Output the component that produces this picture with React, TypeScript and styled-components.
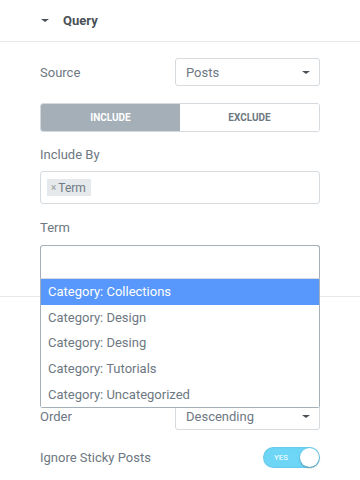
import React from 'react'
import styled, { createGlobalStyle } from 'styled-components'

const GlobalStyle = createGlobalStyle`
  body {
    margin: 0;
    background: #fff;
    font-family: Roboto, 'Liberation Sans', Arial, sans-serif;
    color: #6d7882;
  }
`

const Panel = styled.div`
  width: 360px;
  height: 480px;
  overflow: hidden;
  background: #fff;
`

const SectionHeader = styled.div`
  height: 41px;
  display: flex;
  align-items: center;
  padding-left: 41px;
  gap: 14px;
  border-bottom: 1px solid #e6e9ec;
  font-size: 13px;
  font-weight: 700;
  color: #495157;
`

const Caret = styled.span<{ $size?: number; $color?: string }>`
  width: 0;
  height: 0;
  border-left: ${(p) => p.$size ?? 4}px solid transparent;
  border-right: ${(p) => p.$size ?? 4}px solid transparent;
  border-top: ${(p) => (p.$size ?? 4) - 0.5}px solid ${(p) => p.$color ?? '#495157'};
`

const Section = styled.div<{ $divider?: boolean; $top?: number }>`
  display: flex;
  flex-direction: column;
  padding: ${(p) => p.$top ?? 16}px 40px 18px;
  border-bottom: ${(p) => (p.$divider ? '1px solid #e6e9ec' : 'none')};
`

const InlineControl = styled.div<{ $space?: number }>`
  display: flex;
  align-items: center;
  justify-content: space-between;
  margin-top: ${(p) => p.$space ?? 0}px;
`

const BlockControl = styled.div<{ $space?: number }>`
  position: relative;
  margin-top: ${(p) => p.$space ?? 0}px;
`

const Label = styled.div<{ $below?: number }>`
  font-size: 13px;
  line-height: 15px;
  margin-bottom: ${(p) => p.$below ?? 0}px;
`

const Select = styled.div`
  box-sizing: border-box;
  width: 145px;
  height: 28px;
  display: flex;
  align-items: center;
  justify-content: space-between;
  padding: 0 9px 0 10px;
  border: 1px solid #d5dadf;
  border-radius: 3px;
  font-size: 13px;
  color: #6d7882;
`

const Segmented = styled.div`
  flex: 1;
  display: flex;
  height: 29px;
  box-sizing: border-box;
  border: 1px solid #d5dadf;
  border-radius: 3px;
  overflow: hidden;
`

const Segment = styled.div<{ $active?: boolean }>`
  flex: 1;
  display: flex;
  align-items: center;
  justify-content: center;
  font-size: 10px;
  font-weight: 700;
  text-transform: uppercase;
  background: ${(p) => (p.$active ? '#a4afb7' : '#fff')};
  color: ${(p) => (p.$active ? '#fff' : '#6d7882')};
`

const TagBox = styled.div`
  box-sizing: border-box;
  height: 33px;
  display: flex;
  align-items: center;
  padding: 0 6px;
  border: 1px solid #d5dadf;
  border-radius: 3px;
`

const Tag = styled.span`
  display: inline-flex;
  align-items: center;
  gap: 2px;
  height: 17px;
  padding: 0 5px 0 4px;
  background: #e6e9ec;
  font-size: 12px;
  color: #6d7882;
`

const TagRemove = styled.span`
  font-size: 10px;
  color: #999;
`

const SearchBox = styled.div`
  box-sizing: border-box;
  height: 33px;
  border: 1px solid #a4afb7;
  border-bottom: none;
  border-radius: 3px 3px 0 0;
`

const Dropdown = styled.ul`
  position: absolute;
  top: 100%;
  left: 0;
  right: 0;
  z-index: 10;
  margin: 0;
  padding: 0;
  list-style: none;
  background: #fff;
  border: 1px solid #a4afb7;
  border-top-color: #d5dadf;
  border-radius: 0 0 3px 3px;
`

const Option = styled.li<{ $highlighted?: boolean }>`
  height: 25.6px;
  display: flex;
  align-items: center;
  padding-left: 7px;
  font-size: 13px;
  background: ${(p) => (p.$highlighted ? '#5897fb' : '#fff')};
  color: ${(p) => (p.$highlighted ? '#fff' : '#6d7882')};
`

const Switch = styled.div<{ $on?: boolean }>`
  position: relative;
  box-sizing: border-box;
  width: 57px;
  height: 21px;
  border-radius: 11px;
  background: ${(p) => (p.$on ? '#6dd5f6' : '#d5dadf')};
  box-shadow: inset 0 0 2px rgba(0, 0, 0, 0.15);
  display: flex;
  align-items: center;
  padding-left: 11px;
  font-size: 8px;
  color: #fff;
`

const Knob = styled.span`
  position: absolute;
  right: 1px;
  top: 1px;
  width: 19px;
  height: 19px;
  border-radius: 50%;
  background: #fff;
  box-shadow: 0 1px 2px rgba(0, 0, 0, 0.3);
`

const terms = [
  'Category: Collections',
  'Category: Design',
  'Category: Desing',
  'Category: Tutorials',
  'Category: Uncategorized'
]

const SelectControl = ({ label, value, space }: { label: string; value: string; space?: number }) => (
  <InlineControl $space={space}>
    <Label>{label}</Label>
    <Select>
      {value}
      <Caret $size={4} />
    </Select>
  </InlineControl>
)

const App = () => (
  <Panel>
    <GlobalStyle />
    <SectionHeader>
      <Caret $size={4} />
      Query
    </SectionHeader>
    <Section $divider>
      <SelectControl label="Source" value="Posts" />
      <InlineControl $space={17}>
        <Segmented>
          <Segment $active>Include</Segment>
          <Segment>Exclude</Segment>
        </Segmented>
      </InlineControl>
      <BlockControl $space={15}>
        <Label $below={9}>Include By</Label>
        <TagBox>
          <Tag>
            <TagRemove>×</TagRemove>Term
          </Tag>
        </TagBox>
      </BlockControl>
      <BlockControl $space={16}>
        <Label $below={10}>Term</Label>
        <BlockControl>
          <SearchBox />
          <Dropdown>
            {terms.map((t, i) => (
              <Option key={t} $highlighted={i === 0}>
                {t}
              </Option>
            ))}
          </Dropdown>
        </BlockControl>
      </BlockControl>
    </Section>
    <Section $top={105}>
      <SelectControl label="Order" value="Descending" />
      <InlineControl $space={17}>
        <Label>Ignore Sticky Posts</Label>
        <Switch $on>
          YES
          <Knob />
        </Switch>
      </InlineControl>
    </Section>
  </Panel>
)

export default App
